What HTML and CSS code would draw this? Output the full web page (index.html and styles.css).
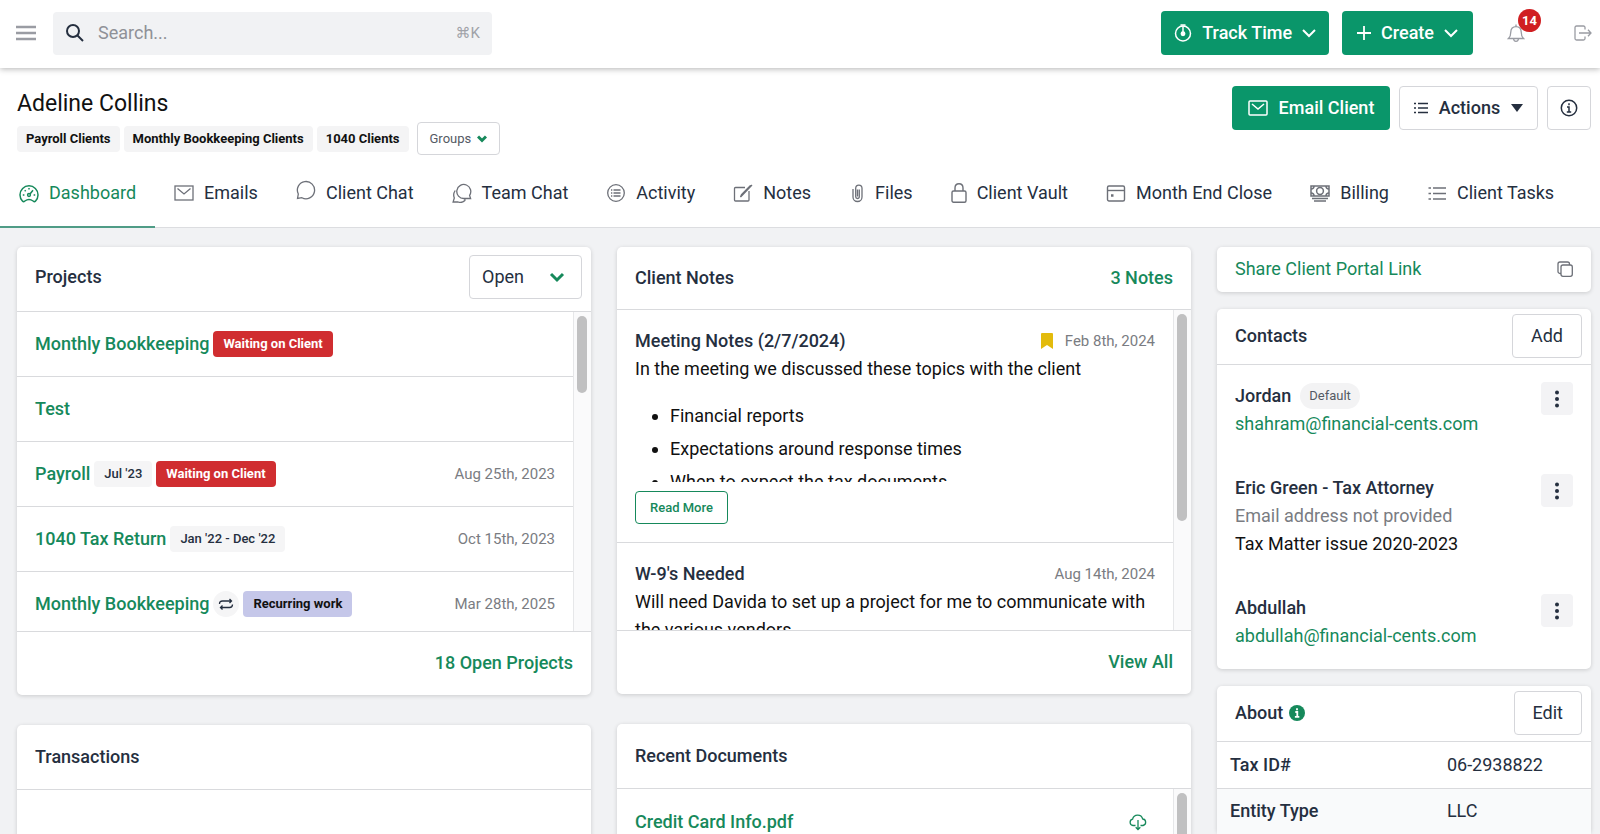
FILE: index.html
```html
<!DOCTYPE html>
<html lang="en">
<head>
  <meta charset="UTF-8">
  <title>Adeline Collins</title>
  <link rel="stylesheet" href="styles.css">
</head>
<body>
  <header class="topbar">
    <button class="icon-btn menu-btn" aria-label="Menu">
      <svg width="20" height="16" viewBox="0 0 20 16" fill="none" stroke="currentColor" stroke-width="2.400"><path d="M0 2h20M0 8h20M0 14h20"/></svg>
    </button>
    <label class="search">
      <svg width="20" height="20" viewBox="0 0 20 20" fill="none" stroke="currentColor" stroke-width="2"><circle cx="8" cy="8" r="6"/><path d="M12.500 12.500L18 18"/></svg>
      <input type="text" placeholder="Search..." aria-label="Search">
      <kbd>⌘K</kbd>
    </label>
    <div class="topbar-right">
      <button class="btn btn-primary track-btn">
        <svg width="18" height="18" viewBox="0 0 18 18" fill="none" stroke="currentColor" stroke-width="1.500"><circle cx="9" cy="9.500" r="7.500"/><path d="M9 2v7M6.500 1h5" /><circle cx="9" cy="9.800" r="1.700" fill="currentColor"/></svg>
        Track Time
        <svg width="14" height="9" viewBox="0 0 14 9" fill="none" stroke="currentColor" stroke-width="2"><path d="M1 1l6 6 6-6"/></svg>
      </button>
      <button class="btn btn-primary create-btn">
        <svg width="14" height="14" viewBox="0 0 14 14" fill="none" stroke="currentColor" stroke-width="1.800"><path d="M7 0v14M0 7h14"/></svg>
        Create
        <svg width="14" height="9" viewBox="0 0 14 9" fill="none" stroke="currentColor" stroke-width="2"><path d="M1 1l6 6 6-6"/></svg>
      </button>
      <button class="icon-btn bell-btn" aria-label="Notifications">
        <svg width="18" height="20" viewBox="0 0 18 20" fill="none" stroke="currentColor" stroke-width="1.300"><path d="M1.500 15.500h15c-1.700-1.600-2.300-3-2.300-6.500 0-3.300-2-5.400-5.200-5.400S3.800 5.700 3.800 9c0 3.500-.6 4.900-2.300 6.500z"/><path d="M9 3.500V1.500M6.600 16c.2 1.600 1.100 2.400 2.400 2.400s2.200-.8 2.400-2.400"/></svg>
        <span class="badge">14</span>
      </button>
      <button class="icon-btn" aria-label="Log out">
        <svg width="18" height="16" viewBox="0 0 18 16" fill="none" stroke="currentColor" stroke-width="1.300"><path d="M11 4.500V2.500a1.500 1.500 0 0 0-1.500-1.500h-7A1.500 1.500 0 0 0 1 2.500v11A1.500 1.500 0 0 0 2.500 15h7a1.500 1.500 0 0 0 1.500-1.500v-2M5 8h12M14 4.800L17 8l-3 3.200"/></svg>
      </button>
    </div>
  </header>

  <section class="client">
    <div>
      <h1>Adeline Collins</h1>
      <div class="groups">
        <span class="chip">Payroll Clients</span>
        <span class="chip">Monthly Bookkeeping Clients</span>
        <span class="chip">1040 Clients</span>
        <button class="btn-groups">Groups
          <svg width="10" height="8" viewBox="0 0 10 8" fill="none" stroke="currentColor" stroke-width="3"><path d="M1 1.500l4 4 4-4"/></svg>
        </button>
      </div>
    </div>
    <div class="client-actions">
      <button class="btn btn-primary email-btn">
        <svg width="20" height="16" viewBox="0 0 20 16" fill="none" stroke="currentColor" stroke-width="1.500"><rect x="1" y="1" width="18" height="14" rx="1"/><path d="M4 4l6 5 6-5"/></svg>
        Email Client
      </button>
      <button class="btn btn-outline actions-btn">
        <svg width="14" height="12" viewBox="0 0 14 12" fill="none" stroke="currentColor" stroke-width="1.300"><path d="M4 1.500h10M4 6h10M4 10.500h10M0 1.500h2M0 6h2M0 10.500h2"/></svg>
        Actions
        <svg width="12" height="8" viewBox="0 0 12 8" fill="currentColor"><path d="M0 0h12L6 8z"/></svg>
      </button>
      <button class="btn btn-outline info-btn" aria-label="Client info">
        <svg width="18" height="18" viewBox="0 0 18 18" fill="none" stroke="currentColor" stroke-width="1.500"><circle cx="9" cy="9" r="7.700"/><path d="M7 8h2v5M6.800 13h4.400M9 4.300v1.900"/></svg>
      </button>
    </div>
  </section>

  <nav class="tabs">
    <a href="#" class="active">
      <svg width="20" height="20" viewBox="0 0 20 20" fill="none" stroke="currentColor" stroke-width="1.500"><path d="M3.600 18.200A9 9 0 1 1 16.400 18.200c-.7.700-1.600.4-2.300-.2-2.400-1.700-5.800-1.700-8.200 0-.7.600-1.600.9-2.300.2z"/><circle cx="10" cy="12" r="1.400"/><path d="M11 11l3-3.800M3.800 12h1.600M14.600 12h1.600M5.700 7.300l1 1M10 5v1.600"/></svg>
      Dashboard
    </a>
    <a href="#">
      <svg width="20" height="20" viewBox="0 0 20 20" fill="none" stroke="currentColor" stroke-width="1.300"><rect x="1" y="3" width="18" height="14"/><path d="M3.500 5.500L10 11l6.500-5.500"/></svg>
      Emails
    </a>
    <a href="#">
      <svg class="raised" width="20" height="20" viewBox="0 0 20 20" fill="none" stroke="currentColor" stroke-width="1.300"><path d="M1.500 18.500l.8-4.500a8.600 8.600 0 1 1 3.600 3.700z"/></svg>
      Client Chat
    </a>
    <a href="#">
      <svg width="20" height="20" viewBox="0 0 20 20" fill="none" stroke="currentColor" stroke-width="1.300"><path d="M18.600 15.500H12a7 7 0 1 1 5.600-3.100z"/><path d="M3.200 7.500C1.500 10 1.300 12.600 2.300 15l-1.200 4h5c2.500.9 5 .3 6.800-1.500v-2"/></svg>
      Team Chat
    </a>
    <a href="#">
      <svg width="20" height="20" viewBox="0 0 20 20" fill="none" stroke="currentColor" stroke-width="1.300"><circle cx="10" cy="10" r="8.300"/><path d="M7.500 7h7M7.500 10h7M7.500 13h7M5 7h1.300M5 10h1.300M5 13h1.300"/></svg>
      Activity
    </a>
    <a href="#">
      <svg width="20" height="20" viewBox="0 0 20 20" fill="none" stroke="currentColor" stroke-width="1.300"><path d="M12 4.500H2.500a1 1 0 0 0-1 1V17a1 1 0 0 0 1 1H15a1 1 0 0 0 1-1V8M19 2L9 12.500 7.500 14l1-2.300L17.500 2.500"/></svg>
      Notes
    </a>
    <a href="#">
      <svg width="16" height="20" viewBox="0 0 16 20" fill="none" stroke="currentColor" stroke-width="1.300"><path d="M10.300 6.500v7.200a1.800 1.800 0 0 1-3.600 0V5.200a3 3 0 0 1 6.300 0v8.800a4.500 4.500 0 0 1-9 0V6M8.500 6.500v7"/></svg>
      Files
    </a>
    <a href="#">
      <svg width="16" height="20" viewBox="0 0 16 20" fill="none" stroke="currentColor" stroke-width="1.400"><rect x="1" y="8" width="14" height="11.300" rx="1.500"/><path d="M4 8V5c0-2.700 1.500-4.200 4-4.200S12 2.300 12 5v3"/></svg>
      Client Vault
    </a>
    <a href="#">
      <svg width="20" height="20" viewBox="0 0 20 20" fill="none" stroke="currentColor" stroke-width="1.400"><rect x="1.500" y="3" width="17" height="15" rx="1.500"/><path d="M1.500 7.500h17"/><path d="M5 12.500h2.500" stroke-width="2.500"/></svg>
      Month End Close
    </a>
    <a href="#">
      <svg width="20" height="20" viewBox="0 0 20 20" fill="none" stroke="currentColor" stroke-width="1.500"><path d="M1 3h18v10H1z"/><circle cx="10" cy="8" r="3.400"/><path d="M1 6c2 0 3-1 3-3M19 6c-2 0-3-1-3-3M1 10c2 0 3 1 3 3M19 10c-2 0-3 1-3 3M2 15.500h16M4 18h12"/></svg>
      Billing
    </a>
    <a href="#">
      <svg width="20" height="20" viewBox="0 0 20 20" fill="none" stroke="currentColor" stroke-width="1.500"><path d="M6 5h13M6 10.500h13M6 16h13M1.500 5h2.500M1.500 10.500h2.500M1.500 16h2.500"/></svg>
      Client Tasks
    </a>
  </nav>

  <main class="dashboard">
    <div class="column">
      <section class="card">
        <div class="card-header projects-header">
          <h2>Projects</h2>
          <div class="select-wrap">
            <select aria-label="Project status"><option>Open</option></select>
            <svg width="16" height="11" viewBox="0 0 16 11" fill="none" stroke="currentColor" stroke-width="3"><path d="M2 2l6 6 6-6"/></svg>
          </div>
        </div>
        <div class="card-body projects-body">
          <ul class="project-list">
            <li><a href="#">Monthly Bookkeeping</a><span class="tag tag-red">Waiting on Client</span></li>
            <li><a href="#">Test</a></li>
            <li><a href="#">Payroll</a><span class="tag tag-gray">Jul '23</span><span class="tag tag-red">Waiting on Client</span><time>Aug 25th, 2023</time></li>
            <li><a href="#">1040 Tax Return</a><span class="tag tag-gray">Jan '22 - Dec '22</span><time>Oct 15th, 2023</time></li>
            <li><a href="#">Monthly Bookkeeping</a><span class="repeat"><svg width="16" height="14" viewBox="0 0 16 14" fill="none" stroke="currentColor" stroke-width="1.300"><path d="M1.500 7C1.500 5 2.500 4 4.500 4h9M11.500 2l2 2-2 2M14.500 7.500c0 2-1 3-3 3h-9M4.500 8.500l-2 2 2 2"/></svg></span><span class="tag tag-purple">Recurring work</span><time>Mar 28th, 2025</time></li>
          </ul>
          <div class="scroll-track"><div class="scroll-thumb thumb-short"></div></div>
        </div>
        <div class="card-footer"><a href="#">18 Open Projects</a></div>
      </section>

      <section class="card">
        <div class="card-header"><h2>Transactions</h2></div>
        <div class="card-body docs-body"></div>
      </section>
    </div>

    <div class="column">
      <section class="card">
        <div class="card-header notes-header">
          <h2>Client Notes</h2>
          <a href="#">3 Notes</a>
        </div>
        <div class="card-body notes-body">
          <div class="note-list">
            <article class="note">
              <div class="note-title">
                <h3>Meeting Notes (2/7/2024)</h3>
                <svg width="12" height="16" viewBox="0 0 12 16" fill="#e3bb0c"><path d="M1 0h10a1 1 0 0 1 1 1v15l-6-4-6 4V1a1 1 0 0 1 1-1z"/></svg>
                <time>Feb 8th, 2024</time>
              </div>
              <div class="note-text">
                <p>In the meeting we discussed these topics with the client</p>
                <ul>
                  <li>Financial reports</li>
                  <li>Expectations around response times</li>
                  <li>When to expect the tax documents</li>
                </ul>
              </div>
              <button class="read-more">Read More</button>
            </article>
            <article class="note">
              <div class="note-title">
                <h3>W-9's Needed</h3>
                <time>Aug 14th, 2024</time>
              </div>
              <p>Will need Davida to set up a project for me to communicate with the various vendors.</p>
            </article>
          </div>
          <div class="scroll-track"><div class="scroll-thumb thumb-long"></div></div>
        </div>
        <div class="card-footer"><a href="#">View All</a></div>
      </section>

      <section class="card">
        <div class="card-header"><h2>Recent Documents</h2></div>
        <div class="card-body docs-body">
          <div class="doc-row">
            <a href="#">Credit Card Info.pdf</a>
            <button class="icon-btn download" aria-label="Download">
              <svg width="18" height="18" viewBox="0 0 18 18" fill="none" stroke="currentColor" stroke-width="1.300"><path d="M6.500 12.500H4a3.200 3.200 0 0 1-.4-6.300A5.200 5.200 0 0 1 13.700 6a3.300 3.300 0 0 1 .4 6.500h-2.600M9 7v9.500M6.700 14.200L9 16.500l2.300-2.300"/></svg>
            </button>
          </div>
          <div class="scroll-track"><div class="scroll-thumb thumb-long"></div></div>
        </div>
      </section>
    </div>

    <div class="column side">
      <section class="card share">
        <a href="#">Share Client Portal Link</a>
        <button class="icon-btn copy" aria-label="Copy link">
          <svg width="16" height="16" viewBox="0 0 16 16" fill="none" stroke="currentColor" stroke-width="1.300"><rect x="4" y="4" width="11.300" height="11.300" rx="2"/><path d="M4 12.500H3a2 2 0 0 1-2-2V3a2 2 0 0 1 2-2h7.500a2 2 0 0 1 2 2v1"/></svg>
        </button>
      </section>

      <section class="card">
        <div class="card-header side-header">
          <h2>Contacts</h2>
          <button class="btn btn-outline plain">Add</button>
        </div>
        <ul class="contacts">
          <li>
            <div>
              <h3>Jordan <span class="pill">Default</span></h3>
              <a href="#">shahram@financial-cents.com</a>
            </div>
            <button class="more" aria-label="More options"><svg width="6" height="18" viewBox="0 0 6 18" fill="currentColor"><circle cx="3" cy="2.500" r="2"/><circle cx="3" cy="9" r="2"/><circle cx="3" cy="15.500" r="2"/></svg></button>
          </li>
          <li>
            <div>
              <h3>Eric Green - Tax Attorney</h3>
              <p class="muted">Email address not provided</p>
              <p>Tax Matter issue 2020-2023</p>
            </div>
            <button class="more" aria-label="More options"><svg width="6" height="18" viewBox="0 0 6 18" fill="currentColor"><circle cx="3" cy="2.500" r="2"/><circle cx="3" cy="9" r="2"/><circle cx="3" cy="15.500" r="2"/></svg></button>
          </li>
          <li>
            <div>
              <h3>Abdullah</h3>
              <a href="#">abdullah@financial-cents.com</a>
            </div>
            <button class="more" aria-label="More options"><svg width="6" height="18" viewBox="0 0 6 18" fill="currentColor"><circle cx="3" cy="2.500" r="2"/><circle cx="3" cy="9" r="2"/><circle cx="3" cy="15.500" r="2"/></svg></button>
          </li>
        </ul>
      </section>

      <section class="card">
        <div class="card-header side-header">
          <h2>About</h2>
          <svg class="about-info" width="16" height="16" viewBox="0 0 16 16"><circle cx="8" cy="8" r="8" fill="currentColor"/><path d="M6.300 7h2v4.500M5.900 11.800h4.400M8 3.300v2" fill="none" stroke="#fff" stroke-width="1.800"/></svg>
          <button class="btn btn-outline plain">Edit</button>
        </div>
        <table class="about">
          <tr><th scope="row">Tax ID#</th><td>06-2938822</td></tr>
          <tr><th scope="row">Entity Type</th><td>LLC</td></tr>
        </table>
      </section>
    </div>
  </main>
</body>
</html>
```

FILE: styles.css
```css
* {
  box-sizing: border-box;
}
body {
  margin: 0;
  height: 100vh;
  overflow: hidden;
  font-family: Roboto, "Liberation Sans", sans-serif;
  font-size: 18px;
  line-height: 28px;
  color: #252f3f;
  background: #f1f2f4;
}
h1, h2, h3, p, ul {
  margin: 0;
  padding: 0;
}
h2, h3 {
  font-size: 18px;
  font-weight: 500;
}
ul {
  list-style: none;
}
a {
  color: #16895b;
  text-decoration: none;
}
svg {
  display: block;
  flex: none;
}
button, input, select {
  font: inherit;
  color: inherit;
}
button {
  cursor: pointer;
}

/* top bar */
.topbar {
  position: relative;
  display: flex;
  align-items: center;
  height: 68px;
  padding: 0 8px 2px 16px;
  background: #fff;
  box-shadow: 0 1px 6px rgba(0, 0, 0, 0.3);
}
.icon-btn {
  display: flex;
  padding: 0;
  border: 0;
  background: none;
  color: #9a9ca3;
}
.menu-btn {
  margin-right: 17px;
}
.search {
  display: flex;
  align-items: center;
  width: 439px;
  height: 43px;
  padding: 0 12px;
  border-radius: 4px;
  background: #f1f2f4;
}
.search input {
  flex: 1;
  min-width: 0;
  margin-left: 13px;
  padding: 0;
  border: 0;
  outline: 0;
  background: none;
}
.search input::placeholder {
  color: #8f9197;
}
.search kbd {
  font-family: Roboto, "DejaVu Sans", sans-serif;
  font-size: 15px;
  color: #a0a2a8;
}
.topbar-right {
  display: flex;
  align-items: center;
  margin-left: auto;
}
.btn {
  display: flex;
  align-items: center;
  justify-content: center;
  height: 44px;
  border: 1px solid transparent;
  border-radius: 4px;
  font-weight: 500;
}
.btn-primary {
  background: #0a966a;
  color: #fff;
}
.btn-outline {
  background: #fff;
  border-color: #d5d6da;
}
.track-btn, .create-btn {
  gap: 10px;
  padding: 0 12px;
}
.create-btn {
  margin-left: 13px;
  padding: 0 14px;
}
.bell-btn {
  position: relative;
  margin: 0 49px 0 34px;
}
.badge {
  position: absolute;
  top: -14px;
  right: -16px;
  width: 23px;
  height: 23px;
  border-radius: 50%;
  background: #d01f22;
  color: #fff;
  font-size: 13px;
  font-weight: 700;
  line-height: 23px;
  text-align: center;
}

/* client heading */
.client {
  display: flex;
  justify-content: space-between;
  height: 91px;
  padding: 18px 9px 0 17px;
  background: #fff;
}
h1 {
  font-size: 23px;
  font-weight: 400;
  line-height: 36px;
  color: #111;
}
.groups {
  display: flex;
  align-items: center;
  gap: 4px;
}
.chip {
  padding: 0 9px;
  border-radius: 4px;
  background: #f4f4f5;
  color: #111;
  font-size: 13px;
  font-weight: 700;
  line-height: 26px;
}
.btn-groups {
  display: flex;
  align-items: center;
  gap: 6px;
  height: 33px;
  margin-left: 4px;
  padding: 0 12px;
  border: 1px solid #d5d6da;
  border-radius: 4px;
  background: #fff;
  color: #555a64;
  font-size: 13px;
}
.btn-groups svg {
  color: #16895b;
}
.client-actions {
  display: flex;
  gap: 9px;
}
.email-btn {
  gap: 11px;
  width: 158px;
}
.actions-btn {
  gap: 11px;
  width: 139px;
}
.info-btn {
  width: 44px;
  padding: 0;
}

/* tabs */
.tabs {
  display: flex;
  height: 69px;
  border-bottom: 1px solid #dcdde0;
  background: #fff;
}
.tabs a {
  display: flex;
  align-items: center;
  gap: 10px;
  height: 69px;
  padding: 0 19px;
  border-bottom: 2px solid transparent;
  color: #252f3f;
  white-space: nowrap;
}
.tabs svg {
  color: #6d7078;
}
.tabs .raised {
  margin-bottom: 5px;
}
.tabs .active,
.tabs .active svg {
  color: #16895b;
}
.tabs .active {
  border-bottom-color: #4f9c86;
}

/* dashboard grid */
.dashboard {
  display: grid;
  grid-template-columns: 1fr 1fr 374px;
  gap: 26px;
  padding: 19px 9px 0 17px;
}
.column {
  display: flex;
  flex-direction: column;
  gap: 30px;
  min-width: 0;
}
.side {
  gap: 17px;
}
.card {
  border-radius: 5px;
  background: #fff;
  box-shadow: 0 1px 4px rgba(0, 0, 0, 0.16);
}
.card-header {
  display: flex;
  align-items: center;
  height: 65px;
  padding: 0 18px;
  border-bottom: 1px solid #d9dadd;
}
.projects-header {
  padding: 0 9px 4px 18px;
}
.notes-header {
  height: 63px;
}
.card-header > a,
.card-footer a {
  margin-left: auto;
  font-weight: 500;
}
.select-wrap {
  position: relative;
  margin-left: auto;
}
.select-wrap select {
  display: block;
  width: 113px;
  height: 44px;
  padding: 0 12px;
  border: 1px solid #d5d6da;
  border-radius: 4px;
  background: #fff;
  appearance: none;
}
.select-wrap svg {
  position: absolute;
  top: 17px;
  right: 17px;
  color: #16895b;
  pointer-events: none;
}
.card-body {
  display: flex;
  overflow: hidden;
}
.projects-body {
  height: 319px;
}
.notes-body {
  height: 320px;
}
.docs-body {
  height: 260px;
}
.scroll-track {
  flex: none;
  width: 18px;
  padding: 4px 3px;
  border-left: 1px solid #e6e7e9;
  background: #fafafb;
}
.scroll-thumb {
  width: 10px;
  border-radius: 5px;
  background: #c0c0c1;
}
.thumb-short {
  height: 77px;
}
.thumb-long {
  height: 207px;
}
.card-footer {
  display: flex;
  align-items: center;
  height: 64px;
  padding: 0 18px 2px;
  border-top: 1px solid #d9dadd;
}
time {
  margin-left: auto;
  color: #7a7c82;
  font-size: 15px;
}

/* projects */
.project-list {
  flex: 1;
}
.project-list li {
  display: flex;
  align-items: center;
  gap: 4px;
  height: 65px;
  padding: 0 18px;
  border-bottom: 1px solid #d9dadd;
}
.project-list a,
.doc-row a {
  font-weight: 500;
}
.tag {
  padding: 0 10px;
  border-radius: 4px;
  font-size: 13px;
  font-weight: 700;
  line-height: 26px;
}
.tag-red {
  background: #d02d30;
  color: #fff;
}
.tag-gray {
  background: #f5f5f6;
  font-weight: 500;
}
.tag-purple {
  background: #c5c7e9;
  color: #111;
}
.repeat {
  display: flex;
  align-items: center;
  justify-content: center;
  width: 26px;
  height: 26px;
  border-radius: 50%;
  background: #f5f5f6;
}

/* notes */
.note-list {
  flex: 1;
}
.note {
  padding: 17px 18px 18px;
  border-bottom: 1px solid #d9dadd;
  color: #111;
}
.note-title {
  display: flex;
  align-items: center;
}
.note-title svg {
  margin-left: auto;
}
.note-title svg + time {
  margin-left: 12px;
}
.note h3 {
  color: #252f3f;
}
.note-text {
  height: 127px;
  overflow: hidden;
}
.note ul {
  margin-top: 16px;
  padding-left: 35px;
  list-style: disc;
  line-height: 33px;
}
.read-more {
  display: block;
  height: 33px;
  margin-top: 9px;
  padding: 0 14px;
  border: 1px solid #16895b;
  border-radius: 4px;
  background: #fff;
  color: #16895b;
  font-size: 13px;
  font-weight: 500;
}
.doc-row {
  display: flex;
  flex: 1;
  justify-content: space-between;
  align-items: center;
  height: 65px;
  padding: 0 26px 0 18px;
}
.download {
  color: #16895b;
}

/* right column */
.share {
  display: flex;
  justify-content: space-between;
  align-items: center;
  height: 45px;
  padding: 0 18px 2px;
}
.copy {
  color: #6d7078;
}
.side-header {
  height: 56px;
  padding: 0 9px 1px 18px;
}
.plain {
  margin-left: auto;
  padding: 0 18px;
  font-weight: 400;
}
.about-info {
  margin-left: 6px;
  color: #16895b;
}
.contacts li {
  display: flex;
  justify-content: space-between;
  padding: 17px 18px 19px;
}
.contacts h3 {
  display: flex;
  align-items: center;
  gap: 9px;
}
.contacts p {
  color: #111;
}
.contacts .muted {
  color: #7a7c82;
}
.pill {
  padding: 0 9px;
  border-radius: 13px;
  background: #f3f3f4;
  color: #555a64;
  font-size: 13px;
  font-weight: 400;
  line-height: 26px;
}
.more {
  display: flex;
  align-items: center;
  justify-content: center;
  width: 32px;
  height: 33px;
  padding: 0;
  border: 0;
  border-radius: 4px;
  background: #f3f3f5;
}
.about {
  width: 100%;
  border-collapse: collapse;
}
.about tr + tr {
  border-top: 1px solid #d9dadd;
  background: #f9fafb;
}
.about th, .about td {
  width: 58%;
  height: 46px;
  padding: 0 13px;
  font-weight: 500;
  text-align: left;
}
.about td {
  width: 42%;
  font-weight: 400;
}
```
